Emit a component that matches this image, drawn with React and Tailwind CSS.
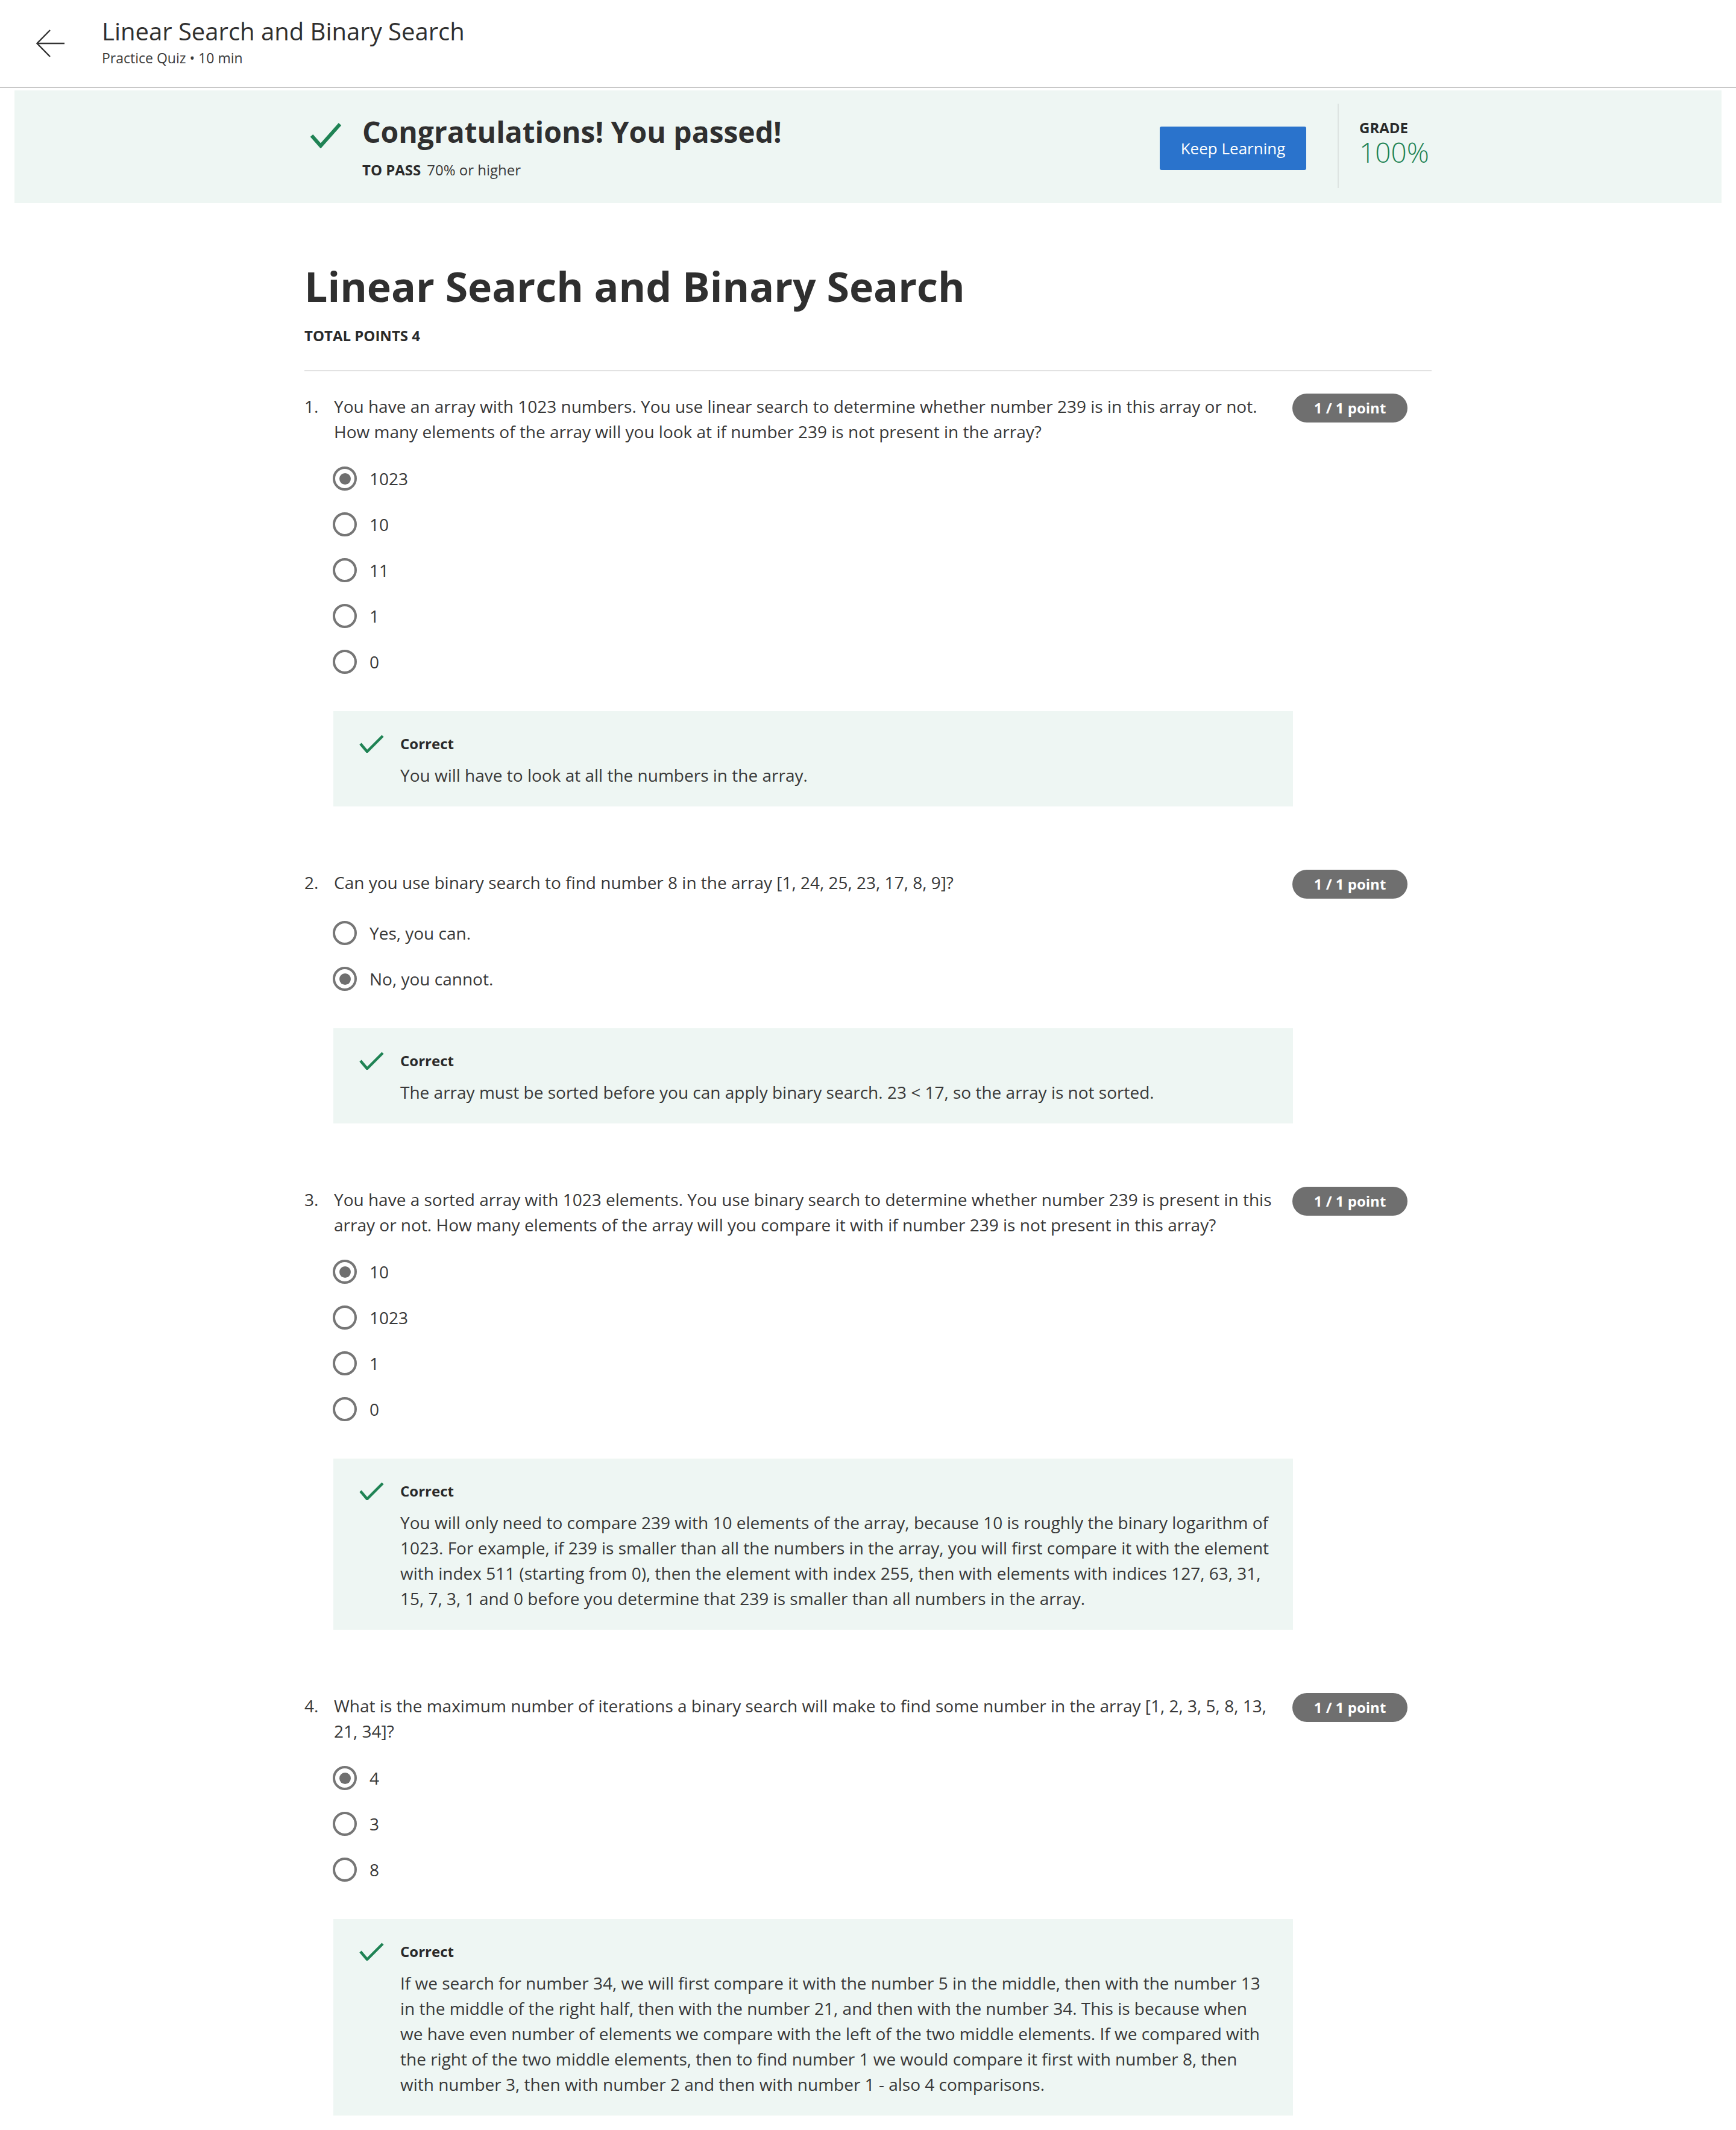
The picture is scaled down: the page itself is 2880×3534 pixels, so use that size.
import React from 'react';

const questions = [
  {
    n: '1.',
    text: 'You have an array with 1023 numbers. You use linear search to determine whether number 239 is in this array or not. How many elements of the array will you look at if number 239 is not present in the array?',
    options: ['1023', '10', '11', '1', '0'],
    picked: 0,
    feedback: 'You will have to look at all the numbers in the array.',
  },
  {
    n: '2.',
    text: 'Can you use binary search to find number 8 in the array [1, 24, 25, 23, 17, 8, 9]?',
    options: ['Yes, you can.', 'No, you cannot.'],
    picked: 1,
    feedback: 'The array must be sorted before you can apply binary search. 23 < 17, so the array is not sorted.',
  },
  {
    n: '3.',
    text: 'You have a sorted array with 1023 elements. You use binary search to determine whether number 239 is present in this array or not. How many elements of the array will you compare it with if number 239 is not present in this array?',
    options: ['10', '1023', '1', '0'],
    picked: 0,
    feedback: 'You will only need to compare 239 with 10 elements of the array, because 10 is roughly the binary logarithm of 1023. For example, if 239 is smaller than all the numbers in the array, you will first compare it with the element with index 511 (starting from 0), then the element with index 255, then with elements with indices 127, 63, 31, 15, 7, 3, 1 and 0 before you determine that 239 is smaller than all numbers in the array.',
  },
  {
    n: '4.',
    text: 'What is the maximum number of iterations a binary search will make to find some number in the array [1, 2, 3, 5, 8, 13, 21, 34]?',
    options: ['4', '3', '8'],
    picked: 0,
    feedback: 'If we search for number 34, we will first compare it with the number 5 in the middle, then with the number 13 in the middle of the right half, then with the number 21, and then with the number 34. This is because when we have even number of elements we compare with the left of the two middle elements. If we compared with the right of the two middle elements, then to find number 1 we would compare it first with number 8, then with number 3, then with number 2 and then with number 1 - also 4 comparisons.',
  },
];

function Radio({ on }) {
  return (
    <span className="flex h-[40px] w-[40px] shrink-0 items-center justify-center rounded-full border-[4px] border-[#767676]">
      {on && <span className="h-[19px] w-[19px] rounded-full bg-[#6f6f6f]" />}
    </span>
  );
}

function Question({ q, first }) {
  return (
    <div className={first ? 'mt-[37px]' : 'mt-[105px]'}>
      <div className="flex items-start">
        <div className="w-[49px] shrink-0 text-[28px] leading-[42px]">{q.n}</div>
        <p className="flex-1 text-[28px] leading-[42px]">{q.text}</p>
        <div className="ml-[25px] mr-[40px] flex h-[48px] w-[191px] shrink-0 items-center justify-center rounded-full bg-[#6f6f6f] text-[24px] font-bold text-white">
          1 / 1 point
        </div>
      </div>

      <div className="mt-[19px] pl-[47px]">
        {q.options.map((o, i) => (
          <div key={o} className="flex h-[76px] items-center gap-[21px]">
            <Radio on={i === q.picked} />
            <span className="text-[28px] leading-[42px]">{o}</span>
          </div>
        ))}
      </div>

      <div className="ml-[48px] mt-[44px] w-[1592px] bg-[#eef6f3] pb-[31px] pl-[43px] pr-[37px] pt-[37px]">
        <div className="flex h-[34px] items-center gap-[27px]">
          <svg width="41" height="30" viewBox="0 0 41 30" fill="none" className="shrink-0">
            <polyline points="2,15 13,28 39,2" stroke="#1f8354" strokeWidth="4.5" />
          </svg>
          <span className="text-[24px] font-bold text-[#2a2a2a]">Correct</span>
        </div>
        <p className="mt-[14px] pl-[68px] text-[28px] leading-[42px]">{q.feedback}</p>
      </div>
    </div>
  );
}

export default function App() {
  return (
    <div className="min-h-screen bg-white pb-[25px] font-['Open_Sans',sans-serif] text-[#383838]">
      {/* top bar */}
      <header className="flex h-[146px] border-b-2 border-[#c8c8c8] pl-[60px] pt-[26px]">
        <svg width="47" height="46" viewBox="0 0 47 46" fill="none" className="mt-[23px] shrink-0">
          <polyline points="23,1 1.5,23 23,45" stroke="#333" strokeWidth="2.5" />
          <line x1="1.5" y1="23" x2="47" y2="23" stroke="#333" strokeWidth="2.5" />
        </svg>
        <div className="ml-[62px]">
          <div className="text-[40px] leading-[52px] text-[#2f2f2f]">Linear Search and Binary Search</div>
          <div className="mt-[2px] text-[23px] leading-[32px] text-[#3a3a3a]">Practice Quiz • 10 min</div>
        </div>
      </header>

      {/* passed banner */}
      <section className="mx-[24px] mt-[4px] h-[187px] bg-[#eef6f3]">
        <div className="mx-auto flex w-[1870px] items-start">
          <div className="mt-[39px] flex-1 pl-[9px]">
            <div className="flex items-start gap-[34px]">
              <svg width="53" height="43" viewBox="0 0 53 43" fill="none" className="mt-[14px] shrink-0">
                <polyline points="3,22 18,39 50,3" stroke="#1f8354" strokeWidth="6" />
              </svg>
              <h2 className="text-[48px] font-bold leading-[60px] text-[#2f2f2f]">Congratulations! You passed!</h2>
            </div>
            <p className="mt-[17px] pl-[87px] text-[24px] leading-[32px] text-[#3a3a3a]">
              <span className="mr-[10px] font-bold text-[#2a2a2a]">TO PASS</span>70% or higher
            </p>
          </div>
          <button className="mt-[60px] h-[72px] w-[243px] rounded-[3px] bg-[#2a73cc] text-[26px] text-white">
            Keep Learning
          </button>
          <div className="ml-[52px] mt-[22px] h-[140px] w-[2px] bg-[#dde3e1]" />
          <div className="ml-[34px] mt-[48px] w-[120px]">
            <div className="text-[24px] font-bold leading-[28px] text-[#2a2a2a]">GRADE</div>
            <div className="text-[46px] font-light leading-[52px] text-[#1f8354]">100%</div>
          </div>
        </div>
      </section>

      {/* quiz body */}
      <main className="mx-auto w-[1870px]">
        <h1 className="mt-[96px] text-[68px] font-bold leading-[84px] text-[#2f2f2f]">Linear Search and Binary Search</h1>
        <div className="mt-[24px] text-[24px] font-bold leading-[32px] text-[#2a2a2a]">TOTAL POINTS 4</div>
        <div className="mt-[41px] h-[2px] bg-[#e2e2e2]" />

        {questions.map((q, i) => (
          <Question key={q.n} q={q} first={i === 0} />
        ))}
      </main>
    </div>
  );
}
